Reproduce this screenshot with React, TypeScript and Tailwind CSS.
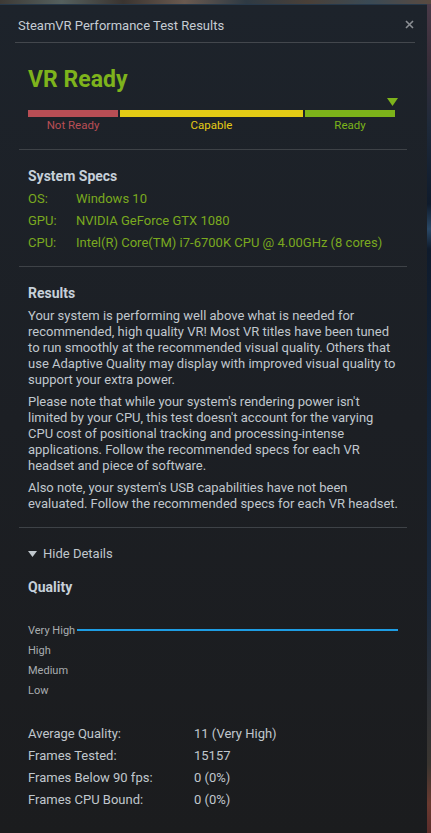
import React from "react";

const F = { fontFamily: "Roboto, 'Noto Sans', sans-serif" } as React.CSSProperties;

export default function App() {
  const p1 = [
    "Your system is performing well above what is needed for",
    "recommended, high quality VR! Most VR titles have been tuned",
    "to run smoothly at the recommended visual quality. Others that",
    "use Adaptive Quality may display with improved visual quality to",
    "support your extra power.",
  ];
  const p2 = [
    "Please note that while your system's rendering power isn't",
    "limited by your CPU, this test doesn't account for the varying",
    "CPU cost of positional tracking and processing-intense",
    "applications. Follow the recommended specs for each VR",
    "headset and piece of software.",
  ];
  const p3 = [
    "Also note, your system's USB capabilities have not been",
    "evaluated. Follow the recommended specs for each VR headset.",
  ];
  const specs: [string, string][] = [
    ["OS:", "Windows 10"],
    ["GPU:", "NVIDIA GeForce GTX 1080"],
    ["CPU:", "Intel(R) Core(TM) i7-6700K CPU @ 4.00GHz (8 cores)"],
  ];
  const stats: [string, string][] = [
    ["Average Quality:", "11 (Very High)"],
    ["Frames Tested:", "15157"],
    ["Frames Below 90 fps:", "0 (0%)"],
    ["Frames CPU Bound:", "0 (0%)"],
  ];

  return (
    <div
      className="w-[431px] h-[833px] overflow-hidden flex flex-col bg-[#1a2230] font-[Roboto,'Noto_Sans',sans-serif]"
      style={F}
    >
      <div className="h-[4px] shrink-0 bg-[linear-gradient(90deg,#3d3a36,#55605e,#3a3430,#6a5a50,#2e3a44,#4a4038,#3a4a55,#5a4a40)]" />
      <div className="flex flex-1 min-h-0">
        <div className="w-[427px] shrink-0 flex flex-col bg-linear-to-b from-[#1d232b] via-[#1c1f24] to-[#1b1c1e] border-t border-[#26384a]">
          {/* header */}
          <div className="h-[37px] pt-1 pl-[18px] pr-[15px] flex items-center justify-between">
            <span className="text-[13px] leading-[16px] text-[#c5ccd3]">SteamVR Performance Test Results</span>
            <svg width="9" height="9" viewBox="0 0 9 9" className="mt-[-2px] mr-[-2px]">
              <path d="M1 1L8 8M8 1L1 8" stroke="#8b8f94" strokeWidth="1.6" />
            </svg>
          </div>
          <div className="h-px ml-[15px] mr-[12px] bg-[#43474d]" />

          {/* VR Ready */}
          <div className="pl-[28px]">
            <div className="mt-[23px] h-[28px] leading-[28px] text-[23px] font-bold text-[#7eb31c]">VR Ready</div>
            <div className="mt-[4px] w-[370px] h-[8px] flex justify-end">
              <svg width="11" height="8" viewBox="0 0 11 8">
                <polygon points="0,0 11,0 5.5,8" fill="#7eb31c" />
              </svg>
            </div>
            <div className="mt-[4px] flex gap-[2px] h-[7px]">
              <div className="w-[90px] bg-[#b94e55]" />
              <div className="w-[183px] bg-[#e3cb15]" />
              <div className="w-[90px] bg-[#7cb31a]" />
            </div>
            <div className="mt-[1px] flex gap-[2px] h-[14px] text-[11.5px] leading-[14px]">
              <div className="w-[90px] text-center text-[#b94e55]">Not Ready</div>
              <div className="w-[183px] text-center text-[#e3cb15]">Capable</div>
              <div className="w-[90px] text-center text-[#7cb31a]">Ready</div>
            </div>
          </div>
          <div className="mt-[17px] h-px ml-[19px] w-[388px] bg-[#3e4247]" />

          {/* System specs */}
          <div className="pl-[28px]">
            <div className="mt-[18px] h-[16px] leading-[16px] text-[14px] font-bold text-[#c6d0d9]">System Specs</div>
            <div className="mt-[4px] flex flex-col text-[13px] text-[#7aa91f]">
              {specs.map(([k, v]) => (
                <div key={k} className="h-[22px] leading-[22px] flex">
                  <span className="w-[48px]">{k}</span>
                  <span className="whitespace-nowrap">{v}</span>
                </div>
              ))}
            </div>
          </div>
          <div className="mt-[12px] h-px ml-[19px] w-[388px] bg-[#3e4247]" />

          {/* Results */}
          <div className="pl-[28px]">
            <div className="mt-[18px] h-[16px] leading-[16px] text-[14px] font-bold text-[#c6d0d9]">Results</div>
            <div className="mt-[7px] text-[13px] leading-[16px] text-[#c0c7cd]">
              {p1.map((l) => (
                <div key={l} className="whitespace-nowrap">{l}</div>
              ))}
            </div>
            <div className="mt-[6px] text-[13px] leading-[16px] text-[#c0c7cd]">
              {p2.map((l) => (
                <div key={l} className="whitespace-nowrap">{l}</div>
              ))}
            </div>
            <div className="mt-[6px] text-[13px] leading-[16px] text-[#c0c7cd]">
              {p3.map((l) => (
                <div key={l} className="whitespace-nowrap">{l}</div>
              ))}
            </div>
          </div>
          <div className="mt-[15px] h-px ml-[19px] w-[388px] bg-[#3e4247]" />

          {/* Details */}
          <div className="pl-[28px]">
            <div className="mt-[18px] h-[16px] flex items-center text-[13px] leading-[16px] text-[#c0c7cd]">
              <svg width="9" height="6" viewBox="0 0 9 6" className="mr-[6px]">
                <polygon points="0,0 9,0 4.5,6" fill="#c0c7cd" />
              </svg>
              <span>Hide Details</span>
            </div>
            <div className="mt-[17px] h-[16px] leading-[16px] text-[14px] font-bold text-[#c6d0d9]">Quality</div>
            <div className="mt-[26px] flex flex-col text-[11px] leading-[20px] text-[#a9adb0]">
              <div className="h-[20px] flex items-center">
                <span className="w-[49px] whitespace-nowrap">Very High</span>
                <div className="w-[321px] h-[2px] bg-[#1e9de3] mt-[-2px]" />
              </div>
              <div className="h-[20px]">High</div>
              <div className="h-[20px]">Medium</div>
              <div className="h-[20px]">Low</div>
            </div>
            <div className="mt-[22px] flex flex-col text-[13px] text-[#c0c7cd]">
              {stats.map(([k, v]) => (
                <div key={k} className="h-[22px] leading-[22px] flex">
                  <span className="w-[166px]">{k}</span>
                  <span>{v}</span>
                </div>
              ))}
            </div>
          </div>
        </div>
        <div className="w-[4px] shrink-0 bg-[linear-gradient(180deg,#4a3a48_0px,#3a2e3a_55px,#1f2a3a_120px,#0f1b2c_200px,#2a4866_225px,#0f1b2c_245px,#13243a_420px,#1b2b40_600px,#3a3530_760px,#6a3a30_800px,#5a2a2a_833px)]" />
      </div>
    </div>
  );
}
